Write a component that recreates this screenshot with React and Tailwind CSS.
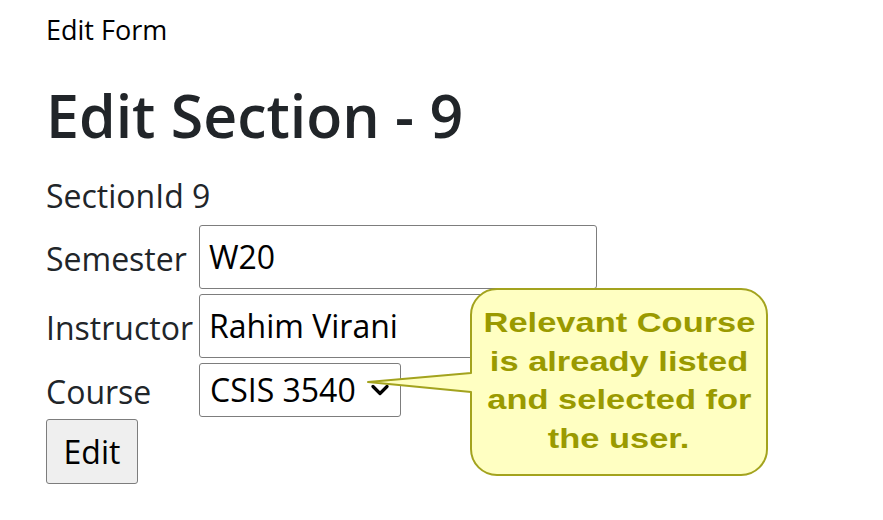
const Chevron = () => (
  <svg width="18" height="12" viewBox="0 0 18 12" className="shrink-0">
    <path d="M2 2.5 L9 9.5 L16 2.5" fill="none" stroke="#000" strokeWidth="3.2" strokeLinecap="round" strokeLinejoin="round" />
  </svg>
);

const Callout = () => (
  <>
    {/* balloon shape with tail pointing at the course dropdown */}
    <svg
      width="412"
      height="192"
      viewBox="0 0 412 192"
      className="absolute left-[360px] top-[286px]"
    >
      <path
        d="M137 3 H381 A26 26 0 0 1 407 29 V163 A26 26 0 0 1 381 189 H137 A26 26 0 0 1 111 163 V106 L8 96 L111 87 V29 A26 26 0 0 1 137 3 Z"
        fill="#ffffc2"
        stroke="#a3a31e"
        strokeWidth="2"
        strokeLinejoin="round"
      />
    </svg>
    <div className="absolute left-[471px] top-[289px] w-[296px] h-[186px] flex flex-col items-center pt-[15px] font-['Liberation_Sans',Arial,sans-serif] font-bold text-[28px] leading-[38.5px] text-[#9a9a00]">
      <span className="scale-x-[1.23] whitespace-nowrap">Relevant Course</span>
      <span className="scale-x-[1.23] whitespace-nowrap">is already listed</span>
      <span className="scale-x-[1.23] whitespace-nowrap">and selected for</span>
      <span className="scale-x-[1.23] whitespace-nowrap">the user.</span>
    </div>
  </>
);

export default function App() {
  return (
    <div className="relative w-full min-h-[520px] bg-white font-['Open_Sans',sans-serif] text-[#212529] overflow-hidden">
      <div className="flex flex-col pl-[46px] pt-[12px]">
        <div className="text-[27px] leading-[36px] text-black">Edit Form</div>

        <h1 className="mt-[31px] text-[59px] leading-[72px] font-semibold">
          Edit Section - 9
        </h1>

        <div className="mt-[23px] text-[32px] leading-[44px]">SectionId 9</div>

        {/* form rows */}
        <div className="mt-[7px] flex flex-col text-[32px]">
          <div className="flex items-center">
            <label className="w-[153px] leading-[44px] pt-[3px]">Semester</label>
            <div className="w-[398px] h-[64px] border border-[#7d7d7d] rounded-[3px] flex items-center px-[9px] text-black leading-[44px]">
              W20
            </div>
          </div>

          <div className="flex items-center mt-[5px]">
            <label className="w-[153px] leading-[44px] pt-[3px]">Instructor</label>
            <div className="w-[398px] h-[64px] border border-[#7d7d7d] rounded-[3px] flex items-center px-[9px] text-black leading-[44px]">
              Rahim Virani
            </div>
          </div>

          <div className="flex items-center mt-[5px]">
            <label className="w-[153px] leading-[44px] pt-[3px]">Course</label>
            <div className="w-[202px] h-[54px] border border-[#7d7d7d] rounded-[3px] flex items-center pl-[10px] pr-[11px] justify-between text-black leading-[44px]">
              <span>CSIS 3540</span>
              <Chevron />
            </div>
          </div>

          <div className="mt-[2px]">
            <button className="w-[92px] h-[65px] bg-[#efefef] border border-[#7d7d7d] rounded-[3px] text-black text-[32px] leading-[44px]">
              Edit
            </button>
          </div>
        </div>
      </div>

      <Callout />
    </div>
  );
}
